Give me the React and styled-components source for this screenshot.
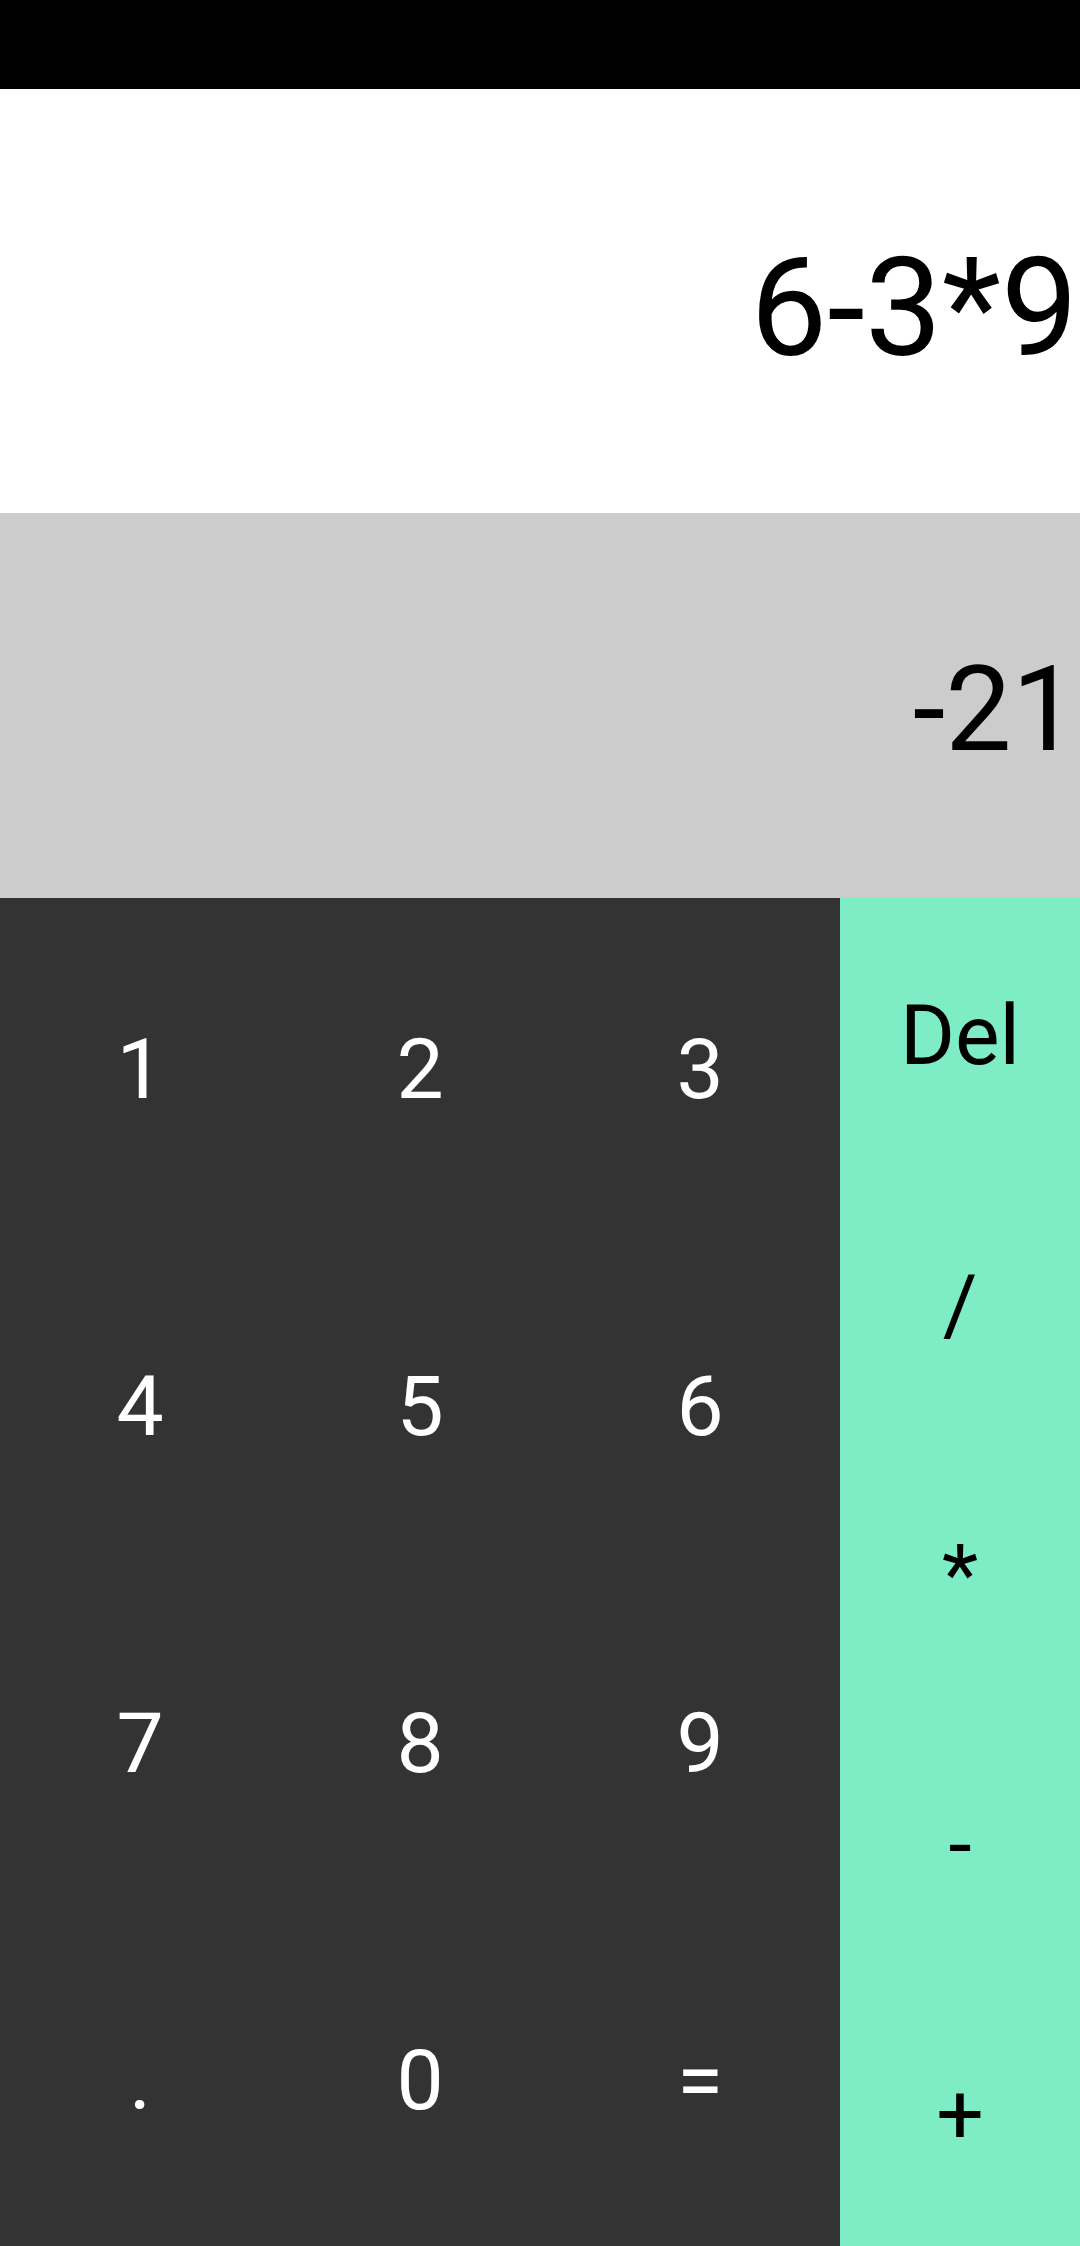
import React from 'react';
import styled, { createGlobalStyle } from 'styled-components';

const GlobalStyle = createGlobalStyle`
  html, body {
    margin: 0;
    padding: 0;
    background: #000;
  }
  body {
    font-family: Roboto, "Noto Sans", sans-serif;
  }
`;

const Screen = styled.div`
  width: 1080px;
  height: 2246px;
  display: flex;
  flex-direction: column;
  overflow: hidden;
`;

const StatusBar = styled.div`
  height: 89px;
  flex: none;
  background: #000;
`;

const Display = styled.div`
  height: ${(p) => p.$height}px;
  flex: none;
  background: ${(p) => p.$bg};
  display: flex;
  align-items: center;
  justify-content: flex-end;
  padding: ${(p) => p.$shift}px 2px 0 0;
  box-sizing: border-box;
`;

const DisplayText = styled.span`
  font-size: ${(p) => p.$size}px;
  color: #000;
  line-height: 1;
  white-space: nowrap;
`;

const Keypad = styled.div`
  flex: 1;
  display: flex;
`;

const Digits = styled.div`
  width: 840px;
  background: #333333;
  display: grid;
  grid-template-columns: repeat(3, 1fr);
  grid-template-rows: repeat(4, 1fr);
`;

const Operators = styled.div`
  flex: 1;
  background: #7eedc6;
  display: grid;
  grid-template-rows: repeat(5, 1fr);
`;

const Key = styled.button`
  border: none;
  background: transparent;
  padding: 6px 0 0;
  margin: 0;
  font-family: Roboto, "Noto Sans", sans-serif;
  font-size: 84px;
  color: ${(p) => (p.$op ? '#000' : '#fff')};
  display: flex;
  align-items: center;
  justify-content: center;
  cursor: pointer;
`;

const digitKeys = ['1', '2', '3', '4', '5', '6', '7', '8', '9', '.', '0', '='];
const opKeys = ['Del', '/', '*', '-', '+'];

export default function App() {
  return (
    <>
      <GlobalStyle />
      <Screen>
        <StatusBar />
        <Display $height={424} $bg="#ffffff" $shift={14}>
          <DisplayText $size={137}>6-3*9</DisplayText>
        </Display>
        <Display $height={385} $bg="#cccccc" $shift={8}>
          <DisplayText $size={118}>-21</DisplayText>
        </Display>
        <Keypad>
          <Digits>
            {digitKeys.map((k) => (
              <Key key={k}>{k}</Key>
            ))}
          </Digits>
          <Operators>
            {opKeys.map((k) => (
              <Key key={k} $op>{k}</Key>
            ))}
          </Operators>
        </Keypad>
      </Screen>
    </>
  );
}
